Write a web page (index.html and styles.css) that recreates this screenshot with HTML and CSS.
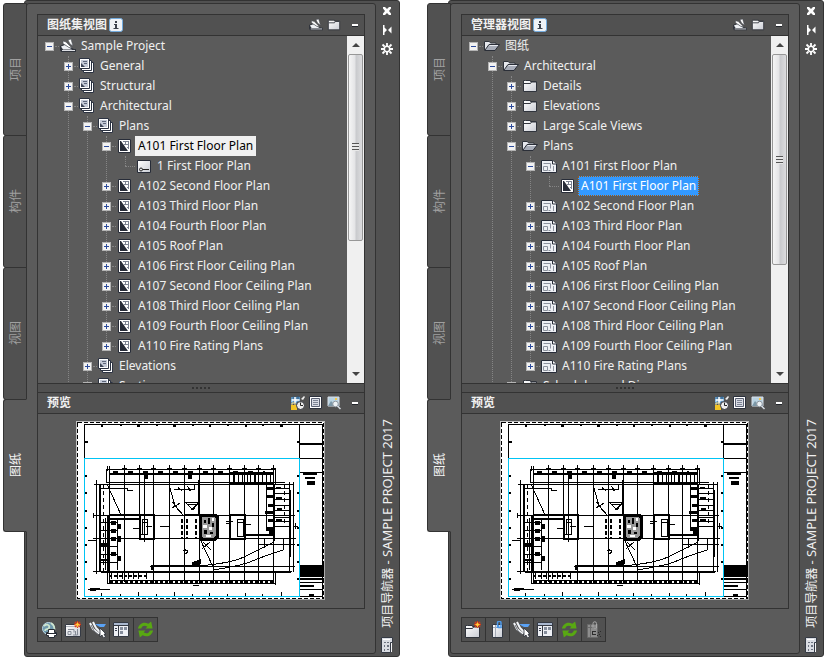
FILE: index.html
```html
<!DOCTYPE html>
<html lang="zh-CN">
<head>
<meta charset="utf-8">
<title>项目导航器 - SAMPLE PROJECT 2017</title>
<link rel="stylesheet" href="styles.css">
</head>
<body>
<svg class="defs" aria-hidden="true">
  <defs>
    <linearGradient id="paper" x1="0" y1="0" x2="1" y2="1"><stop offset="0" stop-color="#fff"/><stop offset="1" stop-color="#c9ccd4"/></linearGradient>
    <symbol id="i-project" viewBox="0 0 16 16"><path d="M0 8l4-2 10 5h2v3H1l-1-2z" fill="#30343c"/><path d="M1 8.500l4-1.500 7 4.500H3z" fill="#eef0f4"/><path d="M2 12.500h13" stroke="#dfe1e6"/><path d="M3 3l3 1 6 6-3-.5-6-4zM8 2l3-1 2 7-3-2z" fill="#fff" stroke="#4a4f58" stroke-width=".6"/></symbol>
    <symbol id="i-subset" viewBox="0 0 16 16"><path d="M4.500 4.500h10v10h-10z" fill="#fff" stroke="#2c3342"/><path d="M2.500 2.500h10v10h-10z" fill="#fff" stroke="#2c3342"/><path d="M.5.5h10v10H.5z" fill="#fff" stroke="#2c3342"/><path d="M2 2h7v7H2z" fill="#c3c9d6"/><path d="M2 5v4h4z" fill="#3a4254"/><path d="M4 3.500h4M5 5.500h3" stroke="#5d667a"/></symbol>
    <symbol id="i-sheet" viewBox="0 0 16 16"><path d="M1.500 1.500h12v13h-12z" fill="#fff" stroke="#272c38"/><path d="M3 3h1l7 10H3z" fill="#272c38"/><path d="M8.500 3v4M11.500 3v8M6 3.500h6M7 6.500h5M10 9.500h2" fill="none" stroke="#7b8291"/></symbol>
    <symbol id="i-viewport" viewBox="0 0 16 16"><path d="M1.500 2.500h13v12h-13z" fill="url(#paper)" stroke="#272c38"/><circle cx="5" cy="11.500" r="1.500" fill="none" stroke="#222"/><path d="M6.500 11.500H13" stroke="#222"/></symbol>
    <symbol id="i-folder" viewBox="0 0 16 16"><path d="M1.500 2.500v11h13v-10h-6v-1h-5z" fill="url(#paper)" stroke="#30343c"/><path d="M2 5.500h6.500l1-1.500H14" fill="none" stroke="#30343c"/></symbol>
    <symbol id="i-open" viewBox="0 0 16 16"><path d="M.5 12V3.500h5l1 1.500h5.500v2" fill="#e7e9ee" stroke="#30343c"/><path d="M.7 12.500L5 6.500h10.500L11 12.500z" fill="#a7acb8" stroke="#2b2f38"/><path d="M5.500 7.500h8.500" stroke="#e8eaf0"/></symbol>
    <symbol id="i-view" viewBox="0 0 16 16"><path d="M.5 2.500h11l4 3.500v8.500H.5z" fill="#eef0f4" stroke="#272c38"/><path d="M11.500 2.500v3.500h4" fill="#fff" stroke="#272c38"/><path d="M2.500 5.500h7v5M2.500 8.500h4v4h-4zM9.500 12.500h-2M12.500 8v5" fill="none" stroke="#8d939f"/></symbol>
    <symbol id="i-info" viewBox="0 0 14 14"><rect x=".5" y=".5" width="13" height="13" rx="2" fill="#f0f3f7" stroke="#73ace0"/><path d="M6 3h2v2H6zM5 6h3v4h1.500v1H4.500v-1H6V7H5z" fill="#3c424d"/></symbol>
    <symbol id="i-clock" viewBox="0 0 14 14"><path d="M0 1h9v7H0z" fill="#8fc2e8"/><path d="M0 2h9M0 7h9M3 0v8M7 0v8" stroke="#2a5a86"/><path d="M4 1v6M1 4h7" stroke="#fff" stroke-width="1.500"/><path d="M0 9h6v5H0z" fill="#f2c426"/><path d="M1 9V7h3v2" fill="none" stroke="#fae08c"/><circle cx="9.500" cy="9.500" r="4" fill="#eee" stroke="#33363d"/><path d="M9.500 6.500v3H12" fill="none" stroke="#222"/><path d="M10 3l3-3 1 1-2 3z" fill="#eee"/></symbol>
    <symbol id="i-list" viewBox="0 0 14 14"><path d="M.5.5h12v12H.5z" fill="#fff" stroke="#2b303c"/><path d="M2.500 2.500h8v8h-8z" fill="#d9dce5" stroke="#596072"/><path d="M4 4.500h5M4 6.500h5M4 8.500h5" stroke="#7d8494"/></symbol>
    <symbol id="i-image" viewBox="0 0 14 14"><path d="M1 1h11v9H1z" fill="#b9d3e2" stroke="#d9e0e8"/><path d="M1 10l3-5 3 3 2-3 3 4v1H1z" fill="#7d98a8"/><path d="M8 2h2v2H8z" fill="#f7c84b"/><circle cx="8.500" cy="8" r="2.800" fill="#edf2f5" stroke="#8d959e"/><path d="M10.500 10l3 3" stroke="#d7dce4" stroke-width="1.500"/></symbol>
    <symbol id="i-min" viewBox="0 0 8 8"><path d="M1 3h6v3H1z" fill="#22252b"/><path d="M1 3h6v2H1z" fill="#fff"/></symbol>
    <symbol id="i-close" viewBox="0 0 12 12"><path d="M2 2h2l2 2 2-2h2v1.500L8 6l2 2.500V10H8L6 8l-2 2H2V8.500L4 6 2 3.500z" fill="#fff"/></symbol>
    <symbol id="i-dock" viewBox="0 0 12 12"><path d="M2 1h1.500v10H2zM3.500 3.500v5L6 6zM10.500 2.500v7L7 6z" fill="#fff"/></symbol>
    <symbol id="i-gear" viewBox="0 0 12 12"><circle cx="6" cy="6" r="2.700" fill="none" stroke="#fff" stroke-width="1.500"/><path d="M6 0v3M6 9v3M0 6h3M9 6h3M1.500 1.500l2 2M10.500 1.500l-2 2M1.500 10.500l2-2M10.500 10.500l-2-2" stroke="#fff" stroke-width="1.800"/></symbol>
    <symbol id="i-palette" viewBox="0 0 12 16"><path d="M.5.5h11v5h-2v10h-9z" fill="#dadde3" stroke="#353a44"/><path d="M10 6h1v9h-1z" fill="#f5f6f8"/><path d="M2 2.500h7" stroke="#fff"/><path d="M3 5h2v1H3zM6 5h2v1H6zM3 8h1v2H3zM6 8h2v2H6zM3 12h1v2H3zM6 12h2v1H6z" fill="#6d7380"/></symbol>
    <symbol id="i-publish" viewBox="0 0 17 17"><circle cx="7.500" cy="7.500" r="6" fill="#6f98ab" stroke="#bcd8e6"/><path d="M3 5c4-3 6 0 5 2s-4 0-4 3M10 2c3 2 4 5 3 8" fill="none" stroke="#cfe6cf" stroke-width="1.700"/><path d="M7.500 8.500h6v3h2v3h-2v2h-6v-2h-2v-3h2z" fill="#fff" stroke="#252a33"/><path d="M6 12.500h9" stroke="#252a33"/></symbol>
    <symbol id="i-spark" viewBox="0 0 8 8"><path d="M4 0v8M0 4h8M1 1l6 6M7 1L1 7" stroke="#e23a13" stroke-width="1.500"/><path d="M4 1l1 2 2 1-2 1-1 2-1-2-2-1 2-1z" fill="#ffcf3c"/></symbol>
    <symbol id="i-newsheet" viewBox="0 0 17 17"><path d="M.5 3.500h15v12H.5z" fill="url(#paper)" stroke="#353a44"/><path d="M1 5.500h14" stroke="#aeb3bd"/><path d="M3 8.500h6v3M3 10.500h3v3H3zM10.500 10v4M12.500 8v6H8" fill="none" stroke="#858b96"/><use href="#i-spark" x="9" y="0" width="7" height="7"/></symbol>
    <symbol id="i-newfolder" viewBox="0 0 17 17"><path d="M.5 4.500v12h14v-11h-7v-1h-5z" fill="url(#paper)" stroke="#30343c"/><path d="M1 7.500h6.500l1-1.500H14" fill="none" stroke="#30343c"/><use href="#i-spark" x="9" y="0" width="7" height="7"/></symbol>
    <symbol id="i-clip" viewBox="0 0 17 17"><path d="M3.500 3.500h10v13h-10z" fill="url(#paper)" stroke="#353a44"/><path d="M4 6.500h9M6.500 4v12" stroke="#a3a9b5"/><path d="M8.500 7V2A1.500 1.500 0 0 1 12 2V6.500H9.500V4" fill="none" stroke="#4c98e8" stroke-width="1.500"/></symbol>
    <symbol id="i-select" viewBox="0 0 17 17"><path d="M1 2l3 6 6 5M4 1l3 6 5 5" fill="none" stroke="#f3f5f8" stroke-width="2"/><path d="M2 4l3 6 5 4" fill="none" stroke="#30343c" stroke-width=".7"/><path d="M6 3h11l-2 3h-4l-2-1z" fill="#5aa2f5"/><path d="M11 7v9l2-2 1.500 3 2-1-1.500-3h2z" fill="#fff" stroke="#2b303a" stroke-width=".8"/></symbol>
    <symbol id="i-table" viewBox="0 0 17 17"><path d="M.5 1.500h15v14H.5z" fill="#eef0f5" stroke="#353a44"/><path d="M1 2h14v2H1z" fill="#aab8cf"/><path d="M5.500 4v11M1 4.500h14" stroke="#353a44"/><path d="M2 7.500h2M2 9.500h2" stroke="#3a4050"/><path d="M7 6h3v3H7zM11 6h3v3h-3zM7 10h3v3H7z" fill="#858d9c"/></symbol>
    <symbol id="i-refresh" viewBox="0 0 18 18"><path d="M1 8C2 3 7 0 12 3l3-2.500 1.500 7.500H9l2-2C8 4 5 5 4.500 8z" fill="#58a812"/><path d="M17 10c-1 5-6 8-11 5l-3 2.500L1.500 10H9l-2 2c3 2 6 1 6.500-2z" fill="#58a812"/></symbol>
    <symbol id="i-unclip" viewBox="0 0 17 17"><path d="M2.500 3.500h10v13h-10z" fill="#8d8d8d" stroke="#696969"/><path d="M3 6.500h9M5.500 4v12" stroke="#6b6b6b"/><path d="M8 7V2.500A1.500 1.500 0 0 1 11.500 2.500V7H9" fill="none" stroke="#a8a8a8"/><path d="M7 10h4v1H7zM7 13h4v1H7zM7 10h1v4H7zM13 11h1v1h-1zM15 10h1v1h-1zM14 13h1v1h-1zM12 14h1v1h-1zM15 15h1v1h-1z" fill="#2c2c2c"/></symbol>

    <symbol id="plan" viewBox="76 421 250 180">
      <path d="M76 421h249v179H76z" fill="#fff"/>
      <path d="M76.500 600v-178.500H325" fill="none" stroke="#c5c5c5"/><path d="M324.500 422v177.500H76" fill="none" stroke="#aaa"/>
      <path d="M77.500 422.500h246v176h-246z" fill="none" stroke="#000" stroke-dasharray="4 2"/>
      <g fill="none" stroke="#000">
        <path d="M84.500 458V424.500h238V598M299.500 424v34M300 458.500h23M300 472.500h23M300 589.500h23M300 582.500h23M300 596.500h23"/>
        <path d="M300 444h23" stroke-width="2"/>
        <path d="M101.500 425v2M120.500 425v1M137 426h3M156.500 425v1M173 426h3M192.500 425v1M209.500 425v2M227.500 425v1M245.500 425v2M262.500 425v1M280 426h3" stroke-width="2"/>
        <path d="M101.500 593v3M120.500 594v2M138 592v4M156.500 594v2M174 592v4M192.500 594v2M209.500 593v3M227.500 594v2M245.500 593v3M262.500 594v2M281 592v4"/>
        <path d="M85 442h3M85 476h2M85 493h2M85 511h2M85 528h2M85 545h2M85 562h2M85 579h2M297 442h2M297 476h2M297 493h2M297 511h2M297 528h2M297 545h2M297 562h2M297 579h2" stroke-width="2"/>
        <path d="M303 474h14M305 478h10M307 481.500h8M307 484h8" stroke-width="2"/>
        <path d="M300 586h14M309 595h5" stroke-width="2"/>
        <path d="M124.500 466v116M139.500 466v50M144.500 476v66M153.500 466v118M169.500 466v118M184.500 466v118M199.500 466v118M213.500 466v118M229.500 466v118M244.500 466v118M258.500 466v118"/>
        <path d="M106 469.500h169M106 482.500h179M94 484.500h200M93 515.500h202M93 538.500h203M109 580.500h165M107 583.500h168M93 571.500h199M150 566.500h145M107.500 571v13M275.500 469v15M275.500 571v14"/>
        <path d="M96.500 482v90M289.500 482v90M293.500 482v90M106.500 469v14M109.500 466v118M273.500 466v118"/>
      </g>
      <g fill="none" stroke="#000" stroke-width="2">
        <path d="M109 474h165M100 484v88M108 515v56M101 572h190M152 570v-4h49M229 484h45M229 473h45M274 484v57M290 490v67"/>
        <path d="M109 515h45M109 519h31M140 515v24h14v-24zM184 515h16M245 535h28"/>
        <path d="M230 515h15v24h-15zM199 480v34"/>
        <path d="M109 576h38M110 582h163" stroke-dasharray="3 2"/>
        <path d="M113 472h152" stroke-dasharray="5 10"/>
        <path d="M103.500 484v88M284.500 484v42" stroke-width="1" stroke-dasharray="4 3"/>
        <path d="M182 519v20M187 519v20M196 519v20" stroke-dasharray="4 2"/>
      </g>
      <g fill="none" stroke="#000">
        <path d="M142.500 519.500h5v15h-5zM237.500 519.500h6v17h-6zM140 534.500h8M142.500 522.500h5M237.500 522.500h6"/>
        <path d="M233.500 475v8M234.500 475v8M238.500 475v8M242.500 475v8M247.500 475v8M250.500 475v8M254.500 475v8M255.500 475v8M262.500 475v8M266.500 475v8M270.500 475v8"/>
        <path d="M274 488.500h15M274 493.500h15M274 499.500h15M274 505.500h15M274 510.500h15M274 517.500h15M274 521.500h15M274 526.500h15M266.500 485v42"/>
        <path d="M101 522.500h16M101 530.500h16M101 538.500h16M101 546.500h16M101 554.500h16M101 562.500h16M117.500 518v52M105.500 518v52"/>
        <path d="M111.500 572v7M117.500 572v7M122.500 572v7M128.500 572v7M133.500 572v7M138.500 572v7M146.500 572v7"/>
        <path d="M107 484l14 31M101 488.500h26v2h6M170 488l5 18 9 10M172 502l7 8M172 508l8-5M174 489.500h20v-5M185 502.500h14v12M185 502l8 8 6-8M188 504.500h8l-4 5z"/>
        <path d="M199 566c20-2 35-4 47-10 9-4 18-9 28-14M213 570c18-3 32-5 44-11 8-3 17-6 26-9v-12M200 539l14 30M203 542l8 8M202 549l8-7M183 550.500h5M184 548l4 4-4 3M258 544.500h30M264.500 539v9"/>
        <path d="M88 589.500h22M90 588.500h10M90 590.500h6M88 540.500h8"/>
        <path d="M193 585.500h6M286 544.500h9M293 526.500h5M295.500 523v6M226 521.500h7M226 523.500h5M245 524.500h6M160 526.500h9M146 526.500h6M133 528.500h6"/>
      </g>
      <g fill="#000">
        <path d="M300 565h24v12h-24zM300 578h24v2h-24z"/>
        <path d="M111 521h5v4h-5zM111 529h5v4h-5zM111 537h5v4h-5zM111 552h5v4h-5zM118 524h3v5h-3zM118 536h3v6h-3zM117 556h4v5h-4zM101 543h8v3h-8zM101 559h8v2h-8z"/>
        <path d="M267 487h6v3h-6zM266 495h7v3h-7zM268 504h5v3h-5zM265 511h8v3h-8zM268 519h6v3h-6zM266 527h7v4h-7zM269 531h6v4h-6zM276 487h5v2h-5zM276 497h6v2h-6zM277 508h5v2h-5zM276 519h6v2h-6z"/>
        <path d="M144 474h4v5h-4zM188 474h4v5h-4zM187 486l5 4-3 1zM178 487l5 4-5-1zM192 562l9-3v5l-9 2z"/>
      </g>
      <path d="M202 515h13l2 2v20l-2 2h-13l-2-2v-20z" fill="#999" stroke="#000" stroke-width="3"/>
      <path d="M204 520h2v3h-2zM208 518h2v6h-2zM204 530h3v4h-3zM210 532h3v2h-3zM212 523h2v4h-2z" fill="#000"/><path d="M203 525h4v3h-4zM209 527h3v3h-3zM212 518h2v3h-2zM206 535h5v2h-5z" fill="#fff"/>
      <path d="M107.500 466v5M124.500 465v6M139.500 465v6M153.500 465v6M169.500 465v6M184.500 465v6M199.500 465v6M213.500 465v6M229.500 465v6M244.500 465v6M258.500 465v6M273.500 465v6M122 468.500h5M137 468.500h5M151 468.500h5M167 468.500h5M182 468.500h5M197 468.500h5M211 468.500h5M227 468.500h5M242 468.500h5M256 468.500h5M271 468.500h5M96.500 480v6M93.500 513v5M96.500 512v6M96.500 536v6M96.500 569v5" stroke="#000"/>
      <path d="M84.500 458.500h215v138h-215z" fill="none" stroke="#00c4f4"/>
    </symbol>
  </defs>
</svg>

<main class="desktop">
  <section class="palette" aria-label="图纸集视图">
    <nav class="tabs">
      <button class="tab"><span>项目</span></button>
      <button class="tab"><span>构件</span></button>
      <button class="tab"><span>视图</span></button>
      <button class="tab active"><span>图纸</span></button>
    </nav>
    <div class="frame">
      <div class="content">
        <div class="box">
          <header class="head">
            <h2>图纸集视图</h2>
            <button class="icon-btn info" aria-label="信息"><svg><use href="#i-info"/></svg></button>
            <button class="icon-btn push" aria-label="图纸集"><svg><use href="#i-project"/></svg></button>
            <button class="icon-btn" aria-label="资源管理器"><svg><use href="#i-folder"/></svg></button>
            <button class="icon-btn mini" aria-label="收起"><svg><use href="#i-min"/></svg></button>
          </header>
          <div class="pane">
            <ul class="tree">
              <li><div class="row"><button class="exp open" aria-label="折叠"></button><svg><use href="#i-project"/></svg><span>Sample Project</span></div>
                <ul>
                  <li><div class="row"><button class="exp" aria-label="展开"></button><svg><use href="#i-subset"/></svg><span>General</span></div></li>
                  <li><div class="row"><button class="exp" aria-label="展开"></button><svg><use href="#i-subset"/></svg><span>Structural</span></div></li>
                  <li><div class="row"><button class="exp open" aria-label="折叠"></button><svg><use href="#i-subset"/></svg><span>Architectural</span></div>
                    <ul>
                      <li><div class="row"><button class="exp open" aria-label="折叠"></button><svg><use href="#i-subset"/></svg><span>Plans</span></div>
                        <ul>
                          <li><div class="row"><button class="exp open" aria-label="折叠"></button><svg><use href="#i-sheet"/></svg><span class="current">A101 First Floor Plan</span></div>
                            <ul><li><div class="row"><i class="leaf"></i><svg><use href="#i-viewport"/></svg><span>1 First Floor Plan</span></div></li></ul>
                          </li>
                          <li><div class="row"><button class="exp" aria-label="展开"></button><svg><use href="#i-sheet"/></svg><span>A102 Second Floor Plan</span></div></li>
                          <li><div class="row"><button class="exp" aria-label="展开"></button><svg><use href="#i-sheet"/></svg><span>A103 Third Floor Plan</span></div></li>
                          <li><div class="row"><button class="exp" aria-label="展开"></button><svg><use href="#i-sheet"/></svg><span>A104 Fourth Floor Plan</span></div></li>
                          <li><div class="row"><button class="exp" aria-label="展开"></button><svg><use href="#i-sheet"/></svg><span>A105 Roof Plan</span></div></li>
                          <li><div class="row"><button class="exp" aria-label="展开"></button><svg><use href="#i-sheet"/></svg><span>A106 First Floor Ceiling Plan</span></div></li>
                          <li><div class="row"><button class="exp" aria-label="展开"></button><svg><use href="#i-sheet"/></svg><span>A107 Second Floor Ceiling Plan</span></div></li>
                          <li><div class="row"><button class="exp" aria-label="展开"></button><svg><use href="#i-sheet"/></svg><span>A108 Third Floor Ceiling Plan</span></div></li>
                          <li><div class="row"><button class="exp" aria-label="展开"></button><svg><use href="#i-sheet"/></svg><span>A109 Fourth Floor Ceiling Plan</span></div></li>
                          <li><div class="row"><button class="exp" aria-label="展开"></button><svg><use href="#i-sheet"/></svg><span>A110 Fire Rating Plans</span></div></li>
                        </ul>
                      </li>
                      <li><div class="row"><button class="exp" aria-label="展开"></button><svg><use href="#i-subset"/></svg><span>Elevations</span></div></li>
                      <li><div class="row"><button class="exp" aria-label="展开"></button><svg><use href="#i-subset"/></svg><span>Sections</span></div></li>
                    </ul>
                  </li>
                </ul>
              </li>
            </ul>
            <div class="scroll">
              <button class="arrow up" aria-label="向上"></button>
              <div class="track"><div class="thumb short"></div></div>
              <button class="arrow down" aria-label="向下"></button>
            </div>
          </div>
          <div class="splitter"><i></i><i></i><i></i><i></i><i></i></div>
          <header class="head">
            <h2>预览</h2>
            <button class="icon-btn push" aria-label="忙时预览"><svg><use href="#i-clock"/></svg></button>
            <button class="icon-btn" aria-label="详细信息"><svg><use href="#i-list"/></svg></button>
            <button class="icon-btn" aria-label="预览"><svg><use href="#i-image"/></svg></button>
            <button class="icon-btn mini" aria-label="收起"><svg><use href="#i-min"/></svg></button>
          </header>
          <div class="preview"><svg viewBox="0 0 250 180" role="img" aria-label="A101"><use href="#plan" width="250" height="180"/></svg></div>
        </div>
        <div class="tools">
          <button aria-label="发布"><svg><use href="#i-publish"/></svg></button>
          <button aria-label="新建图纸"><svg><use href="#i-newsheet"/></svg></button>
          <button aria-label="图纸选择"><svg><use href="#i-select"/></svg></button>
          <button aria-label="特性"><svg><use href="#i-table"/></svg></button>
          <button aria-label="刷新"><svg><use href="#i-refresh"/></svg></button>
        </div>
      </div>
      <aside class="titlebar">
        <button aria-label="关闭"><svg><use href="#i-close"/></svg></button>
        <button aria-label="自动隐藏"><svg><use href="#i-dock"/></svg></button>
        <button aria-label="特性"><svg><use href="#i-gear"/></svg></button>
        <h1>项目导航器 <span>- SAMPLE PROJECT 2017</span></h1>
        <svg class="mark"><use href="#i-palette"/></svg>
      </aside>
    </div>
  </section>

  <section class="palette" aria-label="管理器视图">
    <nav class="tabs">
      <button class="tab"><span>项目</span></button>
      <button class="tab"><span>构件</span></button>
      <button class="tab"><span>视图</span></button>
      <button class="tab active"><span>图纸</span></button>
    </nav>
    <div class="frame">
      <div class="content">
        <div class="box">
          <header class="head">
            <h2>管理器视图</h2>
            <button class="icon-btn info" aria-label="信息"><svg><use href="#i-info"/></svg></button>
            <button class="icon-btn push" aria-label="图纸集"><svg><use href="#i-project"/></svg></button>
            <button class="icon-btn" aria-label="资源管理器"><svg><use href="#i-folder"/></svg></button>
            <button class="icon-btn mini" aria-label="收起"><svg><use href="#i-min"/></svg></button>
          </header>
          <div class="pane">
            <ul class="tree">
              <li><div class="row"><button class="exp open" aria-label="折叠"></button><svg><use href="#i-open"/></svg><span>图纸</span></div>
                <ul>
                  <li><div class="row"><button class="exp open" aria-label="折叠"></button><svg><use href="#i-open"/></svg><span>Architectural</span></div>
                    <ul>
                      <li><div class="row"><button class="exp" aria-label="展开"></button><svg><use href="#i-folder"/></svg><span>Details</span></div></li>
                      <li><div class="row"><button class="exp" aria-label="展开"></button><svg><use href="#i-folder"/></svg><span>Elevations</span></div></li>
                      <li><div class="row"><button class="exp" aria-label="展开"></button><svg><use href="#i-folder"/></svg><span>Large Scale Views</span></div></li>
                      <li><div class="row"><button class="exp open" aria-label="折叠"></button><svg><use href="#i-open"/></svg><span>Plans</span></div>
                        <ul>
                          <li><div class="row"><button class="exp open" aria-label="折叠"></button><svg><use href="#i-view"/></svg><span>A101 First Floor Plan</span></div>
                            <ul><li><div class="row"><i class="leaf"></i><svg><use href="#i-sheet"/></svg><span class="selected">A101 First Floor Plan</span></div></li></ul>
                          </li>
                          <li><div class="row"><button class="exp" aria-label="展开"></button><svg><use href="#i-view"/></svg><span>A102 Second Floor Plan</span></div></li>
                          <li><div class="row"><button class="exp" aria-label="展开"></button><svg><use href="#i-view"/></svg><span>A103 Third Floor Plan</span></div></li>
                          <li><div class="row"><button class="exp" aria-label="展开"></button><svg><use href="#i-view"/></svg><span>A104 Fourth Floor Plan</span></div></li>
                          <li><div class="row"><button class="exp" aria-label="展开"></button><svg><use href="#i-view"/></svg><span>A105 Roof Plan</span></div></li>
                          <li><div class="row"><button class="exp" aria-label="展开"></button><svg><use href="#i-view"/></svg><span>A106 First Floor Ceiling Plan</span></div></li>
                          <li><div class="row"><button class="exp" aria-label="展开"></button><svg><use href="#i-view"/></svg><span>A107 Second Floor Ceiling Plan</span></div></li>
                          <li><div class="row"><button class="exp" aria-label="展开"></button><svg><use href="#i-view"/></svg><span>A108 Third Floor Ceiling Plan</span></div></li>
                          <li><div class="row"><button class="exp" aria-label="展开"></button><svg><use href="#i-view"/></svg><span>A109 Fourth Floor Ceiling Plan</span></div></li>
                          <li><div class="row"><button class="exp" aria-label="展开"></button><svg><use href="#i-view"/></svg><span>A110 Fire Rating Plans</span></div></li>
                        </ul>
                      </li>
                      <li><div class="row"><button class="exp" aria-label="展开"></button><svg><use href="#i-folder"/></svg><span>Schedules and Diagrams</span></div></li>
                    </ul>
                  </li>
                </ul>
              </li>
            </ul>
            <div class="scroll">
              <button class="arrow up" aria-label="向上"></button>
              <div class="track"><div class="thumb long"></div></div>
              <button class="arrow down" aria-label="向下"></button>
            </div>
          </div>
          <div class="splitter"><i></i><i></i><i></i><i></i><i></i></div>
          <header class="head">
            <h2>预览</h2>
            <button class="icon-btn push" aria-label="忙时预览"><svg><use href="#i-clock"/></svg></button>
            <button class="icon-btn" aria-label="详细信息"><svg><use href="#i-list"/></svg></button>
            <button class="icon-btn" aria-label="预览"><svg><use href="#i-image"/></svg></button>
            <button class="icon-btn mini" aria-label="收起"><svg><use href="#i-min"/></svg></button>
          </header>
          <div class="preview"><svg viewBox="0 0 250 180" role="img" aria-label="A101"><use href="#plan" width="250" height="180"/></svg></div>
        </div>
        <div class="tools">
          <button aria-label="添加类别"><svg><use href="#i-newfolder"/></svg></button>
          <button aria-label="添加图纸"><svg><use href="#i-clip"/></svg></button>
          <button aria-label="图纸选择"><svg><use href="#i-select"/></svg></button>
          <button aria-label="特性"><svg><use href="#i-table"/></svg></button>
          <button aria-label="刷新"><svg><use href="#i-refresh"/></svg></button>
          <button aria-label="拆离" disabled><svg><use href="#i-unclip"/></svg></button>
        </div>
      </div>
      <aside class="titlebar">
        <button aria-label="关闭"><svg><use href="#i-close"/></svg></button>
        <button aria-label="自动隐藏"><svg><use href="#i-dock"/></svg></button>
        <button aria-label="特性"><svg><use href="#i-gear"/></svg></button>
        <h1>项目导航器 <span>- SAMPLE PROJECT 2017</span></h1>
        <svg class="mark"><use href="#i-palette"/></svg>
      </aside>
    </div>
  </section>
</main>
</body>
</html>
```
FILE: styles.css
```css
* { box-sizing: border-box; }
body {
  margin: 0;
  background: #fff;
  color: #f0f0f0;
  font: 12px/20px "Noto Sans", "Noto Sans CJK SC", sans-serif;
}
button { margin: 0; padding: 0; border: 0; background: none; color: inherit; font: inherit; }
svg { display: block; }
ul { list-style: none; margin: 0; padding: 0; }
h1, h2 { margin: 0; font-size: 12px; line-height: 20px; }
.defs { position: absolute; width: 0; height: 0; }

.desktop {
  display: grid;
  grid-template-columns: 1fr 1fr;
  gap: 27px;
  height: 100vh;
  padding: 0 3px 3px;
}
.palette { display: flex; min-width: 0; min-height: 0; }

/* side tabs */
.tabs { display: flex; flex-direction: column; width: 24px; margin-right: -3px; padding-top: 3px; z-index: 1; }
.tab {
  display: flex;
  align-items: center;
  justify-content: center;
  height: 133px;
  margin-bottom: -1px;
  padding-left: 2px;
  border: 1px solid #333;
  border-radius: 3px 0 0 3px;
  background: #515151;
  color: #a0a0a0;
}
.tab.active { background: #5b5b5b; border-right-color: #5b5b5b; color: #f4f4f4; }
.tab span, .titlebar h1 {
  writing-mode: vertical-rl;
  text-orientation: sideways;
  transform: rotate(180deg);
  white-space: nowrap;
}

/* palette frame */
.frame {
  display: flex;
  flex: 1;
  min-width: 0;
  padding: 2px 0 2px 1px;
  border: 1px solid #333;
  border-radius: 3px;
  background: #515151;
}
.content {
  display: flex;
  flex: 1;
  flex-direction: column;
  min-width: 0;
  padding: 10px 10px 11px;
  border: 1px solid #333;
  border-radius: 3px;
  background: #5b5b5b;
}
.box { display: flex; flex: 1; flex-direction: column; min-height: 0; border: 1px solid #333; }
.head {
  display: flex;
  align-items: center;
  gap: 4px;
  height: 21px;
  padding: 0 5px 0 9px;
  border-bottom: 1px solid #333;
  background: #515151;
}
.icon-btn svg { width: 14px; height: 14px; }
.icon-btn.info { margin-left: -2px; }
.icon-btn.push { margin-left: auto; }
.icon-btn.mini { margin-left: 6px; }
.icon-btn.mini svg { width: 8px; height: 8px; }

/* tree */
.pane { display: flex; flex: 1; min-height: 0; }
.tree { flex: 1; min-width: 0; padding-left: 7px; overflow: hidden; }
.tree ul { position: relative; padding-left: 19px; }
.tree ul::before {
  content: "";
  position: absolute;
  top: 0;
  bottom: 10px;
  left: 23px;
  border-left: 1px dotted #858585;
}
.row { display: flex; align-items: center; height: 20px; white-space: nowrap; }
.row svg { width: 16px; height: 16px; margin: 0 2px 0 6px; }
.row span { padding: 0 3px; }
.exp {
  position: relative;
  flex: none;
  width: 9px;
  height: 9px;
  border: 1px solid #b4b4b4;
  background:
    linear-gradient(#2b4a9b, #2b4a9b) center / 5px 1px no-repeat,
    linear-gradient(#2b4a9b, #2b4a9b) center / 1px 5px no-repeat,
    #f2f2f2;
}
.exp.open { background: linear-gradient(#2b4a9b, #2b4a9b) center / 5px 1px no-repeat, #f2f2f2; }
.exp::after { content: ""; position: absolute; top: 3px; left: 9px; width: 4px; border-top: 1px dotted #858585; }
.leaf { width: 9px; padding-left: 4px; }
.leaf::before { content: ""; display: block; width: 10px; border-top: 1px dotted #858585; }
.row .current { background: #f0f0f0; color: #000; }
.row .selected { background: #3399ff; outline: 1px dotted #a25a10; outline-offset: -1px; color: #fff; }

/* scrollbar */
.scroll { display: flex; flex-direction: column; width: 17px; background: #f0f0f0; }
.arrow { display: flex; align-items: center; justify-content: center; height: 18px; }
.arrow::before { content: ""; border: 4px solid transparent; }
.up::before { border-top: 0; border-bottom-color: #444; }
.down::before { border-bottom: 0; border-top-color: #444; }
.track { flex: 1; padding: 0 1px; }
.thumb {
  display: flex;
  align-items: center;
  justify-content: center;
  border: 1px solid #979797;
  border-radius: 2px;
  background: linear-gradient(90deg, #f5f5f5, #e4e4e6 45%, #c9cacd 55%, #dcdcde);
}
.thumb.short { height: 60%; }
.thumb.long { height: 68%; }
.thumb::before { content: ""; width: 7px; height: 8px; background: repeating-linear-gradient(#555 0 1px, #e8e8e8 1px 3px); }

.splitter {
  display: flex;
  align-items: center;
  justify-content: center;
  gap: 2px;
  height: 10px;
  border: solid #333;
  border-width: 1px 0;
  background: #515151;
}
.splitter i { width: 2px; height: 2px; background: #333; }

.preview { display: flex; justify-content: center; padding: 7px 8px; }
.preview svg { width: 100%; max-width: 250px; shape-rendering: crispEdges; }

/* toolbar */
.tools { display: flex; margin-top: 8px; }
.tools button {
  display: grid;
  place-items: center;
  width: 25px;
  height: 25px;
  margin-right: -1px;
  border: 1px solid #333;
  background: #515151;
}
.tools svg { width: 17px; height: 17px; }

/* vertical title bar */
.titlebar { display: flex; flex-direction: column; align-items: center; width: 23px; padding: 2px 1px 0 0; }
.titlebar button { padding: 0 0 7px; }
.titlebar button svg { width: 12px; height: 12px; }
.titlebar h1 { margin-top: auto; font-weight: 400; }
.titlebar h1 span { font-size: 13px; }
.mark { width: 12px; height: 16px; margin: 9px 0 1px; }
```
